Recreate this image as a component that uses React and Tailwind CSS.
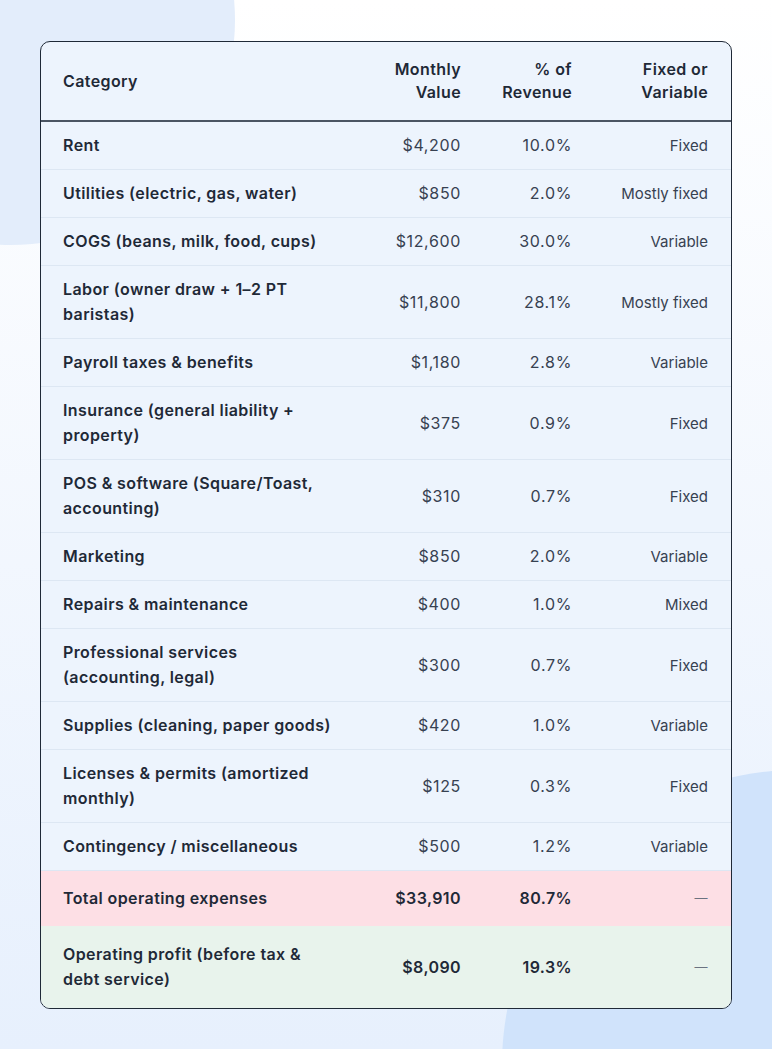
const rows = [
  { label: ['Rent'], value: '$4,200', pct: '10.0%', type: 'Fixed' },
  { label: ['Utilities (electric, gas, water)'], value: '$850', pct: '2.0%', type: 'Mostly fixed' },
  { label: ['COGS (beans, milk, food, cups)'], value: '$12,600', pct: '30.0%', type: 'Variable' },
  { label: ['Labor (owner draw + 1–2 PT', 'baristas)'], value: '$11,800', pct: '28.1%', type: 'Mostly fixed' },
  { label: ['Payroll taxes & benefits'], value: '$1,180', pct: '2.8%', type: 'Variable' },
  { label: ['Insurance (general liability +', 'property)'], value: '$375', pct: '0.9%', type: 'Fixed' },
  { label: ['POS & software (Square/Toast,', 'accounting)'], value: '$310', pct: '0.7%', type: 'Fixed' },
  { label: ['Marketing'], value: '$850', pct: '2.0%', type: 'Variable' },
  { label: ['Repairs & maintenance'], value: '$400', pct: '1.0%', type: 'Mixed' },
  { label: ['Professional services', '(accounting, legal)'], value: '$300', pct: '0.7%', type: 'Fixed' },
  { label: ['Supplies (cleaning, paper goods)'], value: '$420', pct: '1.0%', type: 'Variable' },
  { label: ['Licenses & permits (amortized', 'monthly)'], value: '$125', pct: '0.3%', type: 'Fixed' },
  { label: ['Contingency / miscellaneous'], value: '$500', pct: '1.2%', type: 'Variable' },
];

// wider heading face, stands in for the geometric sans of the original
const labelFont = "font-['Inter',sans-serif] text-[16px] tracking-[0.025em]";

function Label({ lines }) {
  return lines.map((l, i) => (
    <span key={i}>
      {i > 0 && <br />}
      {l}
    </span>
  ));
}

export default function App() {
  return (
    <div className="relative min-h-[1049px] w-full overflow-hidden bg-gradient-to-b from-white to-[#e7f0fd] font-['Inter',sans-serif]">
      <div className="absolute -left-[215px] -top-[205px] h-[450px] w-[450px] rounded-full bg-[#e3edfb]" />
      <div className="absolute left-[502px] top-[770px] h-[590px] w-[590px] rounded-full bg-[#d0e3fb]" />

      <div className="relative px-[40px] pt-[41px]">
        <div className="overflow-hidden rounded-[10px] border border-[#1f2937] bg-[#edf4fd]">
          <table className="w-full table-fixed border-collapse">
            <colgroup>
              <col className="w-[333px]" />
              <col className="w-[110px]" />
              <col className="w-[111px]" />
              <col />
            </colgroup>
            <thead>
              <tr className={`border-b-2 border-[#4b5563] font-semibold leading-[23px] text-[#1f2937] ${labelFont}`}>
                <th className="py-[16px] pl-[22px] text-left font-semibold">Category</th>
                <th className="py-[16px] pr-[23px] text-right font-semibold">
                  Monthly
                  <br />
                  Value
                </th>
                <th className="py-[16px] pr-[23px] text-right font-semibold">
                  % of
                  <br />
                  Revenue
                </th>
                <th className="py-[16px] pr-[23px] text-right font-semibold">
                  Fixed or
                  <br />
                  Variable
                </th>
              </tr>
            </thead>
            <tbody>
              {rows.map((r, i) => (
                <tr key={i} className="border-b border-[#dde7f3] leading-[25px]">
                  <td className={`py-[11px] pl-[22px] font-semibold text-[#1f2937] ${labelFont}`}>
                    <Label lines={r.label} />
                  </td>
                  <td className="py-[11px] pr-[23px] text-right text-[16px] tracking-[0.04em] text-[#374151]">{r.value}</td>
                  <td className="py-[11px] pr-[23px] text-right text-[16px] tracking-[0.04em] text-[#374151]">{r.pct}</td>
                  <td className="py-[11px] pr-[23px] text-right text-[15px] text-[#374151]">{r.type}</td>
                </tr>
              ))}
              <tr className={`bg-[#fddfe5] font-semibold leading-[25px] text-[#1f2937] ${labelFont}`}>
                <td className="py-[15px] pl-[22px]">Total operating expenses</td>
                <td className="py-[15px] pr-[23px] text-right">$33,910</td>
                <td className="py-[15px] pr-[23px] text-right">80.7%</td>
                <td className="py-[15px] pr-[23px] text-right text-[13px] font-normal text-[#6b7280]">—</td>
              </tr>
              <tr className={`bg-[#e8f3ec] font-semibold leading-[25px] text-[#1f2937] ${labelFont}`}>
                <td className="py-[16px] pl-[22px]">
                  Operating profit (before tax &amp;
                  <br />
                  debt service)
                </td>
                <td className="py-[16px] pr-[23px] text-right">$8,090</td>
                <td className="py-[16px] pr-[23px] text-right">19.3%</td>
                <td className="py-[16px] pr-[23px] text-right text-[13px] font-normal text-[#6b7280]">—</td>
              </tr>
            </tbody>
          </table>
        </div>
      </div>
    </div>
  );
}
